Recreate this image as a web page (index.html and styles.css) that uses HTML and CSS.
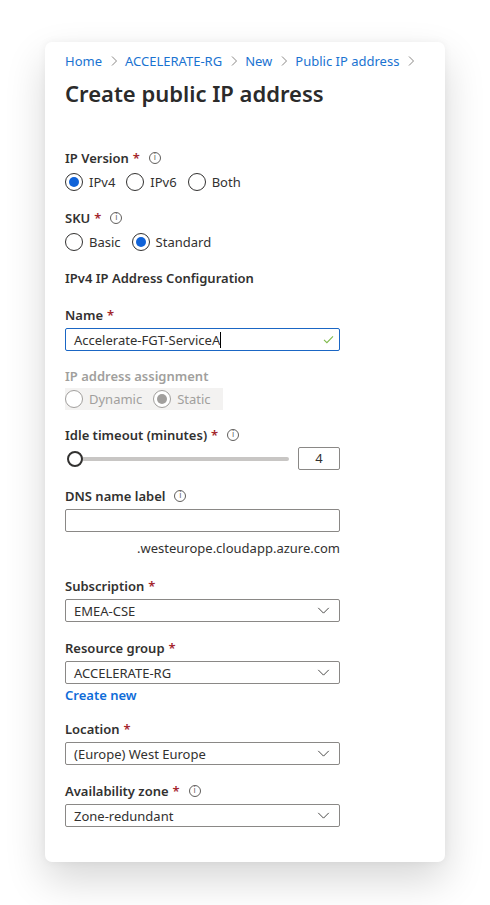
FILE: index.html
```html
<!DOCTYPE html>
<html>
<head>
<meta charset="utf-8">
<link rel="stylesheet" href="styles.css">
</head>
<body>
<div class="card">
  <nav class="crumbs">
    <a>Home</a><svg class="sep" viewBox="0 0 8 12"><path d="M2 1.5 6.5 6 2 10.5" fill="none" stroke="#8a8886" stroke-width="1"/></svg>
    <a>ACCELERATE-RG</a><svg class="sep" viewBox="0 0 8 12"><path d="M2 1.5 6.5 6 2 10.5" fill="none" stroke="#8a8886" stroke-width="1"/></svg>
    <a>New</a><svg class="sep" viewBox="0 0 8 12"><path d="M2 1.5 6.5 6 2 10.5" fill="none" stroke="#8a8886" stroke-width="1"/></svg>
    <a>Public IP address</a><svg class="sep" viewBox="0 0 8 12"><path d="M2 1.5 6.5 6 2 10.5" fill="none" stroke="#8a8886" stroke-width="1"/></svg>
  </nav>
  <h1 class="title">Create public IP address</h1>

  <div class="field f-ipver">
    <div class="label">IP Version <span class="req">*</span><span class="info">i</span></div>
    <div class="radios">
      <label class="radio"><span class="dot on"></span>IPv4</label>
      <label class="radio"><span class="dot"></span>IPv6</label>
      <label class="radio"><span class="dot"></span>Both</label>
    </div>
  </div>

  <div class="field f-sku">
    <div class="label">SKU <span class="req">*</span><span class="info">i</span></div>
    <div class="radios">
      <label class="radio"><span class="dot"></span>Basic</label>
      <label class="radio"><span class="dot on"></span>Standard</label>
    </div>
  </div>

  <div class="section">IPv4 IP Address Configuration</div>

  <div class="field f-name">
    <div class="label">Name <span class="req">*</span></div>
    <div class="input focus"><span class="val">Accelerate-FGT-ServiceA</span><span class="caret"></span>
      <svg class="check" viewBox="0 0 12 10"><path d="M1 5.5 4.2 8.5 11 1.5" fill="none" stroke="#7fba4a" stroke-width="1.2"/></svg>
    </div>
  </div>

  <div class="field f-assign">
    <div class="label dim">IP address assignment</div>
    <div class="radios disabled">
      <label class="radio"><span class="dot"></span>Dynamic</label>
      <label class="radio"><span class="dot on"></span>Static</label>
    </div>
  </div>

  <div class="field f-idle">
    <div class="label">Idle timeout (minutes) <span class="req">*</span><span class="info">i</span></div>
    <div class="slider-row">
      <div class="slider"><span class="thumb"></span><span class="track"></span></div>
      <div class="num">4</div>
    </div>
  </div>

  <div class="field f-dns">
    <div class="label">DNS name label<span class="info">i</span></div>
    <div class="input"></div>
    <div class="suffix">.westeurope.cloudapp.azure.com</div>
  </div>

  <div class="field f-sub">
    <div class="label">Subscription <span class="req">*</span></div>
    <div class="select">EMEA-CSE<svg class="chev" viewBox="0 0 14 8"><path d="M1 1 7 7 13 1" fill="none" stroke="#323130" stroke-width="1"/></svg></div>
  </div>

  <div class="field f-rg">
    <div class="label">Resource group <span class="req">*</span></div>
    <div class="select">ACCELERATE-RG<svg class="chev" viewBox="0 0 14 8"><path d="M1 1 7 7 13 1" fill="none" stroke="#323130" stroke-width="1"/></svg></div>
    <a class="link">Create new</a>
  </div>

  <div class="field f-loc">
    <div class="label">Location <span class="req">*</span></div>
    <div class="select">(Europe) West Europe<svg class="chev" viewBox="0 0 14 8"><path d="M1 1 7 7 13 1" fill="none" stroke="#323130" stroke-width="1"/></svg></div>
  </div>

  <div class="field f-az">
    <div class="label">Availability zone <span class="req">*</span><span class="info">i</span></div>
    <div class="select">Zone-redundant<svg class="chev" viewBox="0 0 14 8"><path d="M1 1 7 7 13 1" fill="none" stroke="#323130" stroke-width="1"/></svg></div>
  </div>
</div>
</body>
</html>
```
FILE: styles.css
```css
* { box-sizing: border-box; }
html, body { margin: 0; padding: 0; background: #ffffff; }
body {
  font-family: "Noto Sans", "Open Sans", sans-serif;
  color: #323130;
  font-size: 13px;
  padding: 42px 45px 0 45px;
  height: 905px;
  overflow: hidden;
}
.card {
  width: 400px;
  height: 820px;
  background: #fff;
  border-radius: 7px;
  box-shadow: 0 18px 40px rgba(0,0,0,0.16), 0 0 8px rgba(0,0,0,0.05);
  padding: 10px 20px 0 20px;
}
.crumbs {
  display: flex;
  align-items: center;
  height: 18px;
  font-size: 13px;
  white-space: nowrap;
}
.crumbs a { color: #1a73d1; flex-shrink: 0; }
.sep { width: 8px; height: 12px; margin: 0 7px 0 8px; flex-shrink: 0; }
.title {
  margin: 8px 0 0 0;
  font-size: 22px;
  font-weight: 600;
  line-height: 30px;
  color: #2b2b2b;
}
.field { display: flex; flex-direction: column; }
.label {
  font-weight: 600;
  font-size: 13px;
  line-height: 18px;
  display: flex;
  align-items: center;
  color: #323130;
}
.label.dim { color: #a19f9d; }
.req { color: #a4262c; margin-left: 4px; }
.info {
  width: 12px; height: 12px;
  border: 1px solid #605e5c;
  border-radius: 50%;
  font-size: 8px;
  line-height: 10px;
  text-align: center;
  font-weight: 400;
  color: #605e5c;
  margin-left: 9px;
  font-family: "DejaVu Sans", sans-serif;
}
.f-ipver { margin-top: 41px; }
.f-sku { margin-top: 16px; }
.radios { display: flex; gap: 11px; margin-top: 4px; height: 22px; align-items: center; }
.radio { display: flex; align-items: center; gap: 6px; font-size: 13px; color: #323130; }
.dot {
  width: 18px; height: 18px; border-radius: 50%;
  border: 1px solid #323130;
  display: flex; align-items: center; justify-content: center;
}
.dot.on::after { content: ""; width: 10px; height: 10px; border-radius: 50%; background: #0f62d8; }
.radios.disabled {
  align-self: flex-start;
  background: #f3f2f1;
  padding: 0 12px 0 0;
  margin-top: 3px;
}
.radios.disabled .radio { color: #a19f9d; }
.radios.disabled .dot { border-color: #a19f9d; background: #fff; }
.radios.disabled .dot.on::after { background: #a19f9d; }
.section {
  margin-top: 16px;
  font-weight: 600;
  font-size: 13px;
  line-height: 18px;
}
.f-name { margin-top: 19px; }
.input {
  margin-top: 4px;
  width: 275px;
  height: 23px;
  border: 1px solid #8a8886;
  border-radius: 2px;
  display: flex;
  align-items: center;
  padding: 0 8px;
}
.input.focus { border-color: #1a66c4; }
.val { font-size: 13px; }
.caret { width: 1px; height: 16px; background: #000; }
.check { width: 11px; height: 9px; margin-left: auto; margin-right: -3px; }
.f-assign { margin-top: 16px; }
.f-idle { margin-top: 16px; }
.slider-row { display: flex; align-items: center; margin-top: 3px; }
.slider { display: flex; align-items: center; width: 222px; margin-left: 2px; }
.thumb {
  width: 16px; height: 16px; border-radius: 50%;
  border: 2px solid #323130; background: #fff;
  position: relative; z-index: 1;
}
.track { flex: 1; height: 4px; background: #c8c6c4; margin-left: -2px; border-radius: 2px; }
.num {
  margin-left: 9px;
  width: 42px; height: 23px;
  border: 1px solid #8a8886; border-radius: 2px;
  text-align: center; line-height: 21px; font-size: 13px;
}
.f-dns { margin-top: 17px; }
.f-dns .input { margin-top: 4px; }
.suffix { width: 275px; text-align: right; margin-top: 8px; font-size: 13px; line-height: 17px; }
.f-sub { margin-top: 20px; }
.select {
  margin-top: 4px;
  width: 275px; height: 23px;
  border: 1px solid #8a8886; border-radius: 2px;
  display: flex; align-items: center;
  padding: 0 8px;
  font-size: 13px;
}
.chev { width: 13px; height: 7px; margin-left: auto; margin-right: 1px; }
.f-rg { margin-top: 17px; }
.link { color: #0f6cd8; font-weight: 600; line-height: 18px; margin-top: 2px; }
.f-loc { margin-top: 16px; }
.f-az { margin-top: 17px; }
```
